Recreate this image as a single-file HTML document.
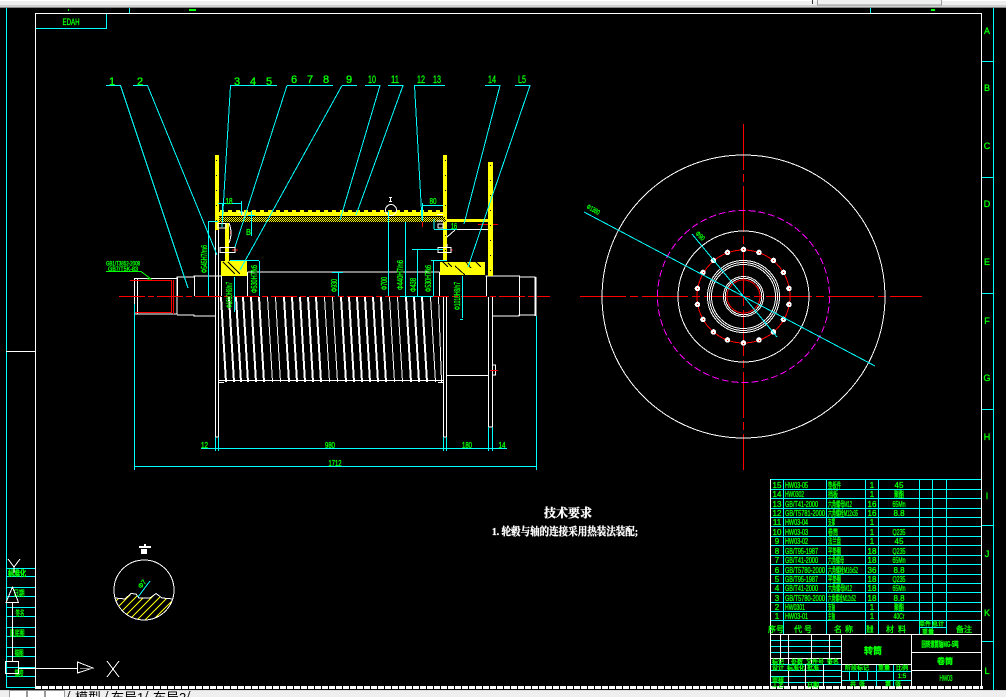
<!DOCTYPE html>
<html><head><meta charset="utf-8"><style>
html,body{margin:0;padding:0;background:#000;width:1006px;height:697px;overflow:hidden}
svg{display:block;position:absolute;left:0;top:0}
text{font-family:"Liberation Sans","Noto Sans CJK SC",sans-serif;fill:#0f0;stroke:#0f0;stroke-width:.35px;font-size:8px}
.c{text-anchor:middle}
.l{font-size:11px}
.nk{stroke:none}
</style></head><body>
<svg width="1006" height="697" viewBox="0 0 1006 697" xmlns="http://www.w3.org/2000/svg" shape-rendering="crispEdges">
<defs>
<pattern id="chk" width="2" height="2" patternUnits="userSpaceOnUse"><rect width="2" height="2" fill="#000"/><rect width="1" height="1" fill="#ff0"/><rect x="1" y="1" width="1" height="1" fill="#ff0"/></pattern>
<clipPath id="hc"><circle cx="144" cy="590" r="30"/></clipPath>
</defs>
<rect width="1006" height="697" fill="#000"/>

<!-- frame -->
<g fill="none" stroke="#fff">
<path d="M35.5 686V13.5H981.5V686"/>
</g>
<g fill="none" stroke="#0ff">
<path d="M6.5 8V687M993.5 8V690M129.5 8V13M870.5 8V13"/>
<path d="M36 28.5H106.5V14"/>
<path d="M6 568.5H35M6 576.5H35M6 587.5H35M6 596.5H35M6 607.5H35M6 616.5H35M6 627.5H35M6 636.5H35M6 647.5H35M6 656.5H35M6 667.5H35M6 676.5H35M6 687.5H35"/>
<path d="M982 61.5H993M982 177.5H993M982 293.5H993M982 409.5H993M982 525.5H993M982 641.5H993"/>
<path d="M6 351.5H35" stroke="#fff"/>
</g>
<text x="71" y="25" class="c" textLength="17" lengthAdjust="spacingAndGlyphs" style="font-size:9px">EDAH</text>
<g style="font-size:9px">
<text x="987" y="34" class="c" style="font-size:9px">A</text><text x="987" y="91" class="c" style="font-size:9px">B</text><text x="987" y="149" class="c" style="font-size:9px">C</text><text x="987" y="207" class="c" style="font-size:9px">D</text><text x="987" y="265" class="c" style="font-size:9px">E</text><text x="987" y="324" class="c" style="font-size:9px">F</text><text x="987" y="381" class="c" style="font-size:9px">G</text><text x="987" y="440" class="c" style="font-size:9px">H</text><text x="987" y="499" class="c" style="font-size:9px">I</text><text x="987" y="557" class="c" style="font-size:9px">J</text><text x="987" y="616" class="c" style="font-size:9px">K</text><text x="987" y="674" class="c" style="font-size:9px">L</text>
</g>
<rect x="189" y="9" width="7" height="2" fill="#0f0"/><rect x="68" y="9" width="1" height="2" fill="#0f0"/><rect x="931" y="9" width="4" height="2" fill="#0f0"/>

<!-- left table text -->
<g>
<text x="17" y="576" class="c" textLength="18" lengthAdjust="spacingAndGlyphs" font-weight="bold">标准化</text>
<text x="19" y="596" class="c" textLength="11" lengthAdjust="spacingAndGlyphs">日期</text>
<text x="20" y="616" class="c" textLength="9" lengthAdjust="spacingAndGlyphs">签名</text>
<text x="17" y="636" class="c" textLength="15" lengthAdjust="spacingAndGlyphs">旧底图</text>
<text x="19" y="656" class="c" textLength="9" lengthAdjust="spacingAndGlyphs">描图</text>
<text x="19" y="676" class="c" textLength="9" lengthAdjust="spacingAndGlyphs">描校</text>
</g>

<!-- shaft outline -->
<g stroke="#fff" fill="none">
<path d="M134.5 279V314H177V277H194V276H221.5V296M137.5 279V314M134 278.500H177M177 315H194V316H215"/>
<path d="M194.5 276V296M177.5 277V296M215.5 230V437H218.5V296"/>
<path d="M218.5 230V296M247.5 272H439.5M247.5 272V296M439.500 272V296"/>
<path d="M443.500 297V437H446.500V297M446.500 375.500H488M488.500 297V427H492.500V297"/>
<path d="M492 316H519V315H536"/>
<path d="M485.500 276H519.500V296M519.500 277H535.500"/>
<path d="M486.500 276V296M519.500 297V316"/>
<path d="M493 365H495.500V375H493"/>
<path d="M447 229.500H488"/>
</g>
<path d="M535.500 277V316" stroke="#fff" stroke-width="2"/>

<!-- centre lines -->
<g stroke="#f00" fill="none">
<path d="M119 296.500H550" stroke-dasharray="26 3 6 3"/>
<path d="M580 296.500H922" stroke-dasharray="46 4 8 4"/>
<path d="M743.500 124V470" stroke-dasharray="46 4 8 4"/>
</g>
<g stroke="#f00" fill="none">
<path d="M130 280.500H172M171.500 280V313M135 312.500H172M173.500 280V314"/>
<path d="M490 370.500H498"/>
<path d="M241.500 215V220M221.500 218V223M230.500 231V234M422.500 221V227M232 250H238M451 250H453M478 224.500H498"/>
</g>

<!-- grooves -->
<g stroke="#fff" fill="none" stroke-width="2">
<path d="M221 297L226 382M229 297L234 382M236 297L241 382M243 297L248 382M251 297L256 382M259 297L264 382M284 297L289 382M292 297L297 382M300 297L305 382M308 297L313 382M316 297L321 382M341 297L346 382M349 297L354 382M357 297L362 382M365 297L370 382M373 297L378 382M381 297L386 382M406 297L411 382M414 297L419 382M422 297L427 382"/>
</g>
<g stroke="#fff" fill="none" stroke-width="1">
<path d="M267.500 297L272.500 382M275.500 297L280.500 382M324.500 297L329.500 382M332.500 297L337.500 382M389.500 297L394.500 382M397.500 297L402.500 382M430.500 297L435.500 382M438.500 297L441.500 382"/>
<path d="M219 380.500H443M219 382.500H224M438 382.500H443"/>
</g>

<!-- yellow parts -->
<g fill="#ff0">
<rect x="215" y="155" width="4" height="75"/>
<rect x="218" y="212" width="225" height="4"/>
<rect x="443" y="155" width="4" height="106"/>
<rect x="488" y="162" width="5" height="114"/>
<rect x="447" y="219" width="41" height="3"/>
<rect x="221" y="261" width="26" height="15"/>
<rect x="440" y="262" width="45" height="13"/>
<rect x="225" y="223" width="4" height="39"/>
</g>
<rect x="219" y="217" width="226" height="5" fill="url(#chk)"/>
<path d="M220 211H443" stroke="#ff0" stroke-width="2" stroke-dasharray="4 4"/>
<g stroke="#000" fill="none">
<path d="M216.500 160V230M445.500 160V260M490.500 165V276" stroke-dasharray="1 14"/>
<path d="M223 262L235 274M228 262L240 274M448 263L452 267M455 266L465 275M466 262L471 268M476 262L481 267M443 262L448 267"/>
</g>

<!-- bolts -->
<g stroke="#fff" fill="none">
<path d="M218 223.500H226V228H218ZM220 247.500H235V252.500H220ZM438 247.500H451V252.500H438ZM229 223Q233 233 229 243M237.500 212H243V216M437 214.500H443M438 224H443V228H438ZM437 221H443M447 244V247"/>
<path d="M447 237L455 230"/>
</g>
<!-- weld mark -->
<g stroke="#fff" fill="none"><circle cx="391" cy="210" r="5.500"/><path d="M389 197.500H392M390.500 197V201M389 201.500H392"/></g>

<!-- leaders and dims -->
<g stroke="#0ff" fill="none">
<path d="M106 85.500H120.500L188 288M133 85.500H147.500L217 255"/>
<path d="M230 85.500H277M230.500 85.500L222 227"/>
<path d="M287 85.500H333M287 85.500L235 247M342 85.500L240 270"/>
<path d="M342 85.500H357M365 85.500H380L340 220M388 85.500H403L356 215"/>
<path d="M414 85.500H445M414.500 85.500L422 220"/>
<path d="M485 85.500H500L464 224M515 85.500H530L468 267"/>
<path d="M218 203.500H241.500M241.500 201V215M222.500 203V215"/>
<path d="M423 205.500H443M422.500 203V221"/>
<path d="M208.500 221.500H218M208.500 221V296"/>
<path d="M234.500 277V312M259.500 261V296M230 260.500H259"/>
<path d="M251.500 211V236M248 215.500H255"/>
<path d="M338.500 272V296M332 272.500H343"/>
<path d="M388.500 211V296M405.500 222V296M417.500 250V296M433.500 261V296M400 296.500H433"/>
<path d="M412 249.500H443M431 260.500H447M462.500 276V318M460 319.500H463M434 229.500H457M434 219V229"/>
<path d="M201 448.500H507M215.500 437V451M218.500 437V451M443.500 437V451M446.500 437V451M488.500 427V451M492.500 427V451"/>
<path d="M134 466.500H536M134.500 304V470M536.500 316V470"/>
</g>
<path d="M106 271.500H141L151 279H147" stroke="#0f0" fill="none" stroke-dasharray="0"/>

<!-- leader labels -->
<g>
<text x="112" y="85" class="c l">1</text><text x="140" y="85" class="c l">2</text><text x="237" y="85" class="c l">3</text><text x="253" y="85" class="c l">4</text><text x="269" y="85" class="c l">5</text><text x="294" y="83" class="c l">6</text><text x="310" y="83" class="c l">7</text><text x="326" y="83" class="c l">8</text><text x="349" y="83" class="c l">9</text><text x="372" y="83" class="c l" textLength="8" lengthAdjust="spacingAndGlyphs">10</text><text x="395" y="83" class="c l" textLength="8" lengthAdjust="spacingAndGlyphs">11</text><text x="421" y="83" class="c l" textLength="8" lengthAdjust="spacingAndGlyphs">12</text><text x="437" y="83" class="c l" textLength="8" lengthAdjust="spacingAndGlyphs">13</text><text x="492" y="83" class="c l" textLength="8" lengthAdjust="spacingAndGlyphs">14</text><text x="522" y="83" class="c l" textLength="8" lengthAdjust="spacingAndGlyphs">L5</text>
</g>
<!-- dim labels -->
<g>
<text x="229" y="204" class="c" textLength="7" lengthAdjust="spacingAndGlyphs">18</text>
<text x="433" y="204" class="c" textLength="7" lengthAdjust="spacingAndGlyphs">80</text>
<text x="454" y="229" class="c" textLength="6" lengthAdjust="spacingAndGlyphs">16</text>
<text x="248.500" y="235" class="c" textLength="5" lengthAdjust="spacingAndGlyphs">B</text>
<text x="204.500" y="448" class="c" textLength="7" lengthAdjust="spacingAndGlyphs">12</text>
<text x="330" y="448" class="c" textLength="10" lengthAdjust="spacingAndGlyphs">980</text>
<text x="467" y="448" class="c" textLength="10" lengthAdjust="spacingAndGlyphs">180</text>
<text x="502" y="448" class="c" textLength="7" lengthAdjust="spacingAndGlyphs">14</text>
<text x="335" y="466" class="c" textLength="13" lengthAdjust="spacingAndGlyphs">1712</text>
<text transform="translate(207 273) rotate(-90)" textLength="28" lengthAdjust="spacingAndGlyphs">Φ545H7/m6</text>
<text transform="translate(232 308) rotate(-90)" textLength="26" lengthAdjust="spacingAndGlyphs">Φ1010H8/n7</text>
<text transform="translate(257 293) rotate(-90)" textLength="28" lengthAdjust="spacingAndGlyphs">Φ530H7/k6</text>
<text transform="translate(337 292) rotate(-90)" textLength="13" lengthAdjust="spacingAndGlyphs">Φ930</text>
<text transform="translate(387 290) rotate(-90)" textLength="13" lengthAdjust="spacingAndGlyphs">Φ700</text>
<text transform="translate(403 290) rotate(-90)" textLength="30" lengthAdjust="spacingAndGlyphs">Φ440H7/n6</text>
<text transform="translate(416 292) rotate(-90)" textLength="14" lengthAdjust="spacingAndGlyphs">Φ438</text>
<text transform="translate(431 292) rotate(-90)" textLength="27" lengthAdjust="spacingAndGlyphs">Φ530H7/k6</text>
<text transform="translate(460 310) rotate(-90)" textLength="28" lengthAdjust="spacingAndGlyphs">Φ1010H8/n7</text>
<text x="106" y="265.500" style="font-size:6px" textLength="34" lengthAdjust="spacingAndGlyphs">GB1/T3852-2008</text>
<text x="108" y="271" style="font-size:6px" textLength="30" lengthAdjust="spacingAndGlyphs">GB7/T5K-83</text>
<text transform="translate(586 208) rotate(30)" style="font-size:7px" textLength="14" lengthAdjust="spacingAndGlyphs">Φ1380</text>
<text transform="translate(695 234) rotate(45)" style="font-size:7px" textLength="10" lengthAdjust="spacingAndGlyphs">Φ90</text>
</g>

<!-- end view -->
<g fill="none" stroke="#fff">
<circle cx="743.500" cy="296.500" r="141.500"/>
<circle cx="743.500" cy="296.500" r="65.500"/>
<circle cx="743.500" cy="296.500" r="36"/>
<circle cx="743.500" cy="296.500" r="34"/>
<circle cx="743.500" cy="296.500" r="32"/>
<circle cx="743.500" cy="296.500" r="20"/>
<circle cx="743.500" cy="296.500" r="18.300"/>
</g>
<circle cx="743.500" cy="296.500" r="86" fill="none" stroke="#f0f" stroke-dasharray="7 3"/>
<circle cx="743.500" cy="296.500" r="46.500" fill="none" stroke="#f00"/>
<circle cx="743.500" cy="296.500" r="16.500" fill="none" stroke="#f00"/>
<g fill="#fff" stroke="none">
<circle cx="743.500" cy="249.500" r="2.800"/><circle cx="759" cy="252.500" r="2.800"/><circle cx="773.500" cy="260.500" r="2.800"/><circle cx="783.500" cy="272.500" r="2.800"/><circle cx="789" cy="288.500" r="2.800"/><circle cx="789" cy="304.500" r="2.800"/><circle cx="783.500" cy="319.500" r="2.800"/><circle cx="773.500" cy="332" r="2.800"/><circle cx="759" cy="340" r="2.800"/><circle cx="743.500" cy="343" r="2.800"/><circle cx="727.500" cy="340" r="2.800"/><circle cx="713.500" cy="332" r="2.800"/><circle cx="703" cy="319.500" r="2.800"/><circle cx="697.500" cy="304.500" r="2.800"/><circle cx="697.500" cy="288.500" r="2.800"/><circle cx="703" cy="272.500" r="2.800"/><circle cx="713.500" cy="260.500" r="2.800"/><circle cx="727.500" cy="252.500" r="2.800"/>
</g>
<g fill="#f00" stroke="none">
<rect x="743" y="249" width="1" height="1"/><rect x="759" y="252" width="1" height="1"/><rect x="773" y="260" width="1" height="1"/><rect x="783" y="272" width="1" height="1"/><rect x="789" y="288" width="1" height="1"/><rect x="789" y="304" width="1" height="1"/><rect x="783" y="319" width="1" height="1"/><rect x="773" y="332" width="1" height="1"/><rect x="759" y="340" width="1" height="1"/><rect x="743" y="343" width="1" height="1"/><rect x="727" y="340" width="1" height="1"/><rect x="713" y="332" width="1" height="1"/><rect x="703" y="319" width="1" height="1"/><rect x="697" y="304" width="1" height="1"/><rect x="697" y="288" width="1" height="1"/><rect x="703" y="272" width="1" height="1"/><rect x="713" y="260" width="1" height="1"/><rect x="727" y="252" width="1" height="1"/>
</g>
<path d="M584 212L875 366M692 234L777 337" stroke="#0ff" fill="none"/>

<!-- section detail -->
<g clip-path="url(#hc)">
<g stroke="#ff0" fill="none">
<path d="M100 625L130 595M108 625L138 595M116 625L146 595M124 625L154 595M132 625L162 595M140 625L170 595M148 625L178 595M156 625L186 595M92 625L122 595"/>
</g>
<path d="M100 598H115L125 599L131 593.500L136 594L139 598H150L156 593.500L162 598L173 599H180V540H100Z" fill="#000"/>
</g>
<circle cx="144" cy="590" r="30" fill="none" stroke="#fff"/>
<path d="M115 598L125 599L131 593.500L136 594L139 598L150 598L156 593.500L162 598L173 599" stroke="#fff" fill="none"/>
<path d="M138 597L150 581" stroke="#0ff" fill="none"/>
<text transform="translate(141 589) rotate(-50)" style="font-size:7px" textLength="9" lengthAdjust="spacingAndGlyphs">Φ7</text>
<g fill="#fff"><rect x="139" y="546" width="12" height="2"/><rect x="144" y="544" width="2" height="2"/><rect x="141" y="549" width="6" height="5"/></g>

<!-- UCS icon -->
<g stroke="#fff" fill="none">
<rect x="5.500" y="661.500" width="13" height="12"/>
<path d="M12.500 661V602M6 602.500H18.500L12.500 587ZM18 668.500H77.500M77.500 662V673L93 668ZM107 661L119 677M119 661L107 677M8 559L14 567L20 559M14 567V573"/>
<path d="M80 668.500H93" stroke="#888"/>
</g>

<!-- title text -->
<text x="568" y="517" class="c nk" style="font-family:'Liberation Serif','Noto Serif CJK SC',serif;font-size:12px;font-weight:bold;fill:#fff;stroke:#fff">技术要求</text>
<text x="492" y="535" textLength="146" lengthAdjust="spacingAndGlyphs" style="font-family:'Liberation Serif','Noto Serif CJK SC',serif;font-size:11px;font-weight:bold;fill:#fff;stroke:#fff">1. 轮毂与轴的连接采用热装法装配;</text>

<!-- parts table -->
<g stroke="#0ff" fill="none">
<path d="M770 479.500H981M770 489.500H981M770 498.500H981M770 508.500H981M770 517.500H981M770 526.500H981M770 536.500H981M770 545.500H981M770 555.500H981M770 564.500H981M770 574.500H981M770 583.500H981M770 592.500H981M770 602.500H981M770 611.500H981M770 620.500H981M919 627.500H946"/>
<path d="M783.500 479V634M826.500 479V634M865.500 479V634M878.500 479V634M919.500 479V634M932.500 479V634M946.500 479V634"/>
<path d="M771 640.500H841M771 646.500H841M771 652.500H841M771 664.500H841M771 670.500H841M771 676.500H841M771 682.500H841"/>
<path d="M841 671.500H911M841 680.500H911M849.500 671V680M858.500 671V680M867.500 671V680M876.500 664V686M893.500 664V686"/>
</g>
<path d="M770.500 479V686M841.500 634V686M911.500 634V686M771 634.500H981M771 658.500H841M841 664.500H911M911 652.500H981M911 670.500H981M780.500 634V664M788.500 634V686M811.500 634V664M829.500 634V664M805.500 664V686M823.500 664V686" stroke="#fff" fill="none"/>
<path d="M35 687.500H983" stroke="#fff" stroke-width="3" stroke-dasharray="6 1"/>

<g>
<text x="777" y="488" class="c">15</text><text x="785" y="488" textLength="23" lengthAdjust="spacingAndGlyphs">HW03-05</text><text x="828" y="488" textLength="13" lengthAdjust="spacingAndGlyphs">垫板件</text><text x="872" y="488" class="c">1</text><text x="899" y="488" class="c">45</text>
<text x="777" y="497" class="c">14</text><text x="785" y="497" textLength="19" lengthAdjust="spacingAndGlyphs">HW0302</text><text x="828" y="497" textLength="10" lengthAdjust="spacingAndGlyphs">挡板</text><text x="872" y="497" class="c">1</text><text x="899" y="497" class="c" textLength="10" lengthAdjust="spacingAndGlyphs">聚酯</text>
<text x="777" y="507" class="c">13</text><text x="785" y="507" textLength="33" lengthAdjust="spacingAndGlyphs">GB/T41-2000</text><text x="828" y="507" textLength="24" lengthAdjust="spacingAndGlyphs">六角螺母M12</text><text x="872" y="507" class="c">16</text><text x="899" y="507" class="c" textLength="13" lengthAdjust="spacingAndGlyphs">65Mn</text>
<text x="777" y="516" class="c">12</text><text x="785" y="516" textLength="40" lengthAdjust="spacingAndGlyphs">GB/T5781-2000</text><text x="828" y="516" textLength="30" lengthAdjust="spacingAndGlyphs">六角螺栓M12x35</text><text x="872" y="516" class="c">16</text><text x="899" y="516" class="c">8.8</text>
<text x="777" y="525" class="c">11</text><text x="785" y="525" textLength="23" lengthAdjust="spacingAndGlyphs">HW03-04</text><text x="828" y="525" textLength="7" lengthAdjust="spacingAndGlyphs">支撑</text><text x="872" y="525" class="c">1</text>
<text x="777" y="535" class="c">10</text><text x="785" y="535" textLength="23" lengthAdjust="spacingAndGlyphs">HW03-03</text><text x="828" y="535" textLength="10" lengthAdjust="spacingAndGlyphs">卷筒</text><text x="872" y="535" class="c">1</text><text x="899" y="535" class="c" textLength="13" lengthAdjust="spacingAndGlyphs">Q235</text>
<text x="777" y="544" class="c">9</text><text x="785" y="544" textLength="23" lengthAdjust="spacingAndGlyphs">HW03-02</text><text x="828" y="544" textLength="13" lengthAdjust="spacingAndGlyphs">法兰盘</text><text x="872" y="544" class="c">1</text><text x="899" y="544" class="c">45</text>
<text x="777" y="554" class="c">8</text><text x="785" y="554" textLength="33" lengthAdjust="spacingAndGlyphs">GB/T95-1987</text><text x="828" y="554" textLength="13" lengthAdjust="spacingAndGlyphs">平垫圈</text><text x="872" y="554" class="c">18</text><text x="899" y="554" class="c" textLength="13" lengthAdjust="spacingAndGlyphs">Q235</text>
<text x="777" y="563" class="c">7</text><text x="785" y="563" textLength="33" lengthAdjust="spacingAndGlyphs">GB/T41-2000</text><text x="828" y="563" textLength="16" lengthAdjust="spacingAndGlyphs">六角螺母</text><text x="872" y="563" class="c">18</text><text x="899" y="563" class="c" textLength="13" lengthAdjust="spacingAndGlyphs">65Mn</text>
<text x="777" y="573" class="c">6</text><text x="785" y="573" textLength="40" lengthAdjust="spacingAndGlyphs">GB/T5780-2000</text><text x="828" y="573" textLength="30" lengthAdjust="spacingAndGlyphs">六角螺栓M16x52</text><text x="872" y="573" class="c">36</text><text x="899" y="573" class="c">8.8</text>
<text x="777" y="582" class="c">5</text><text x="785" y="582" textLength="33" lengthAdjust="spacingAndGlyphs">GB/T95-1987</text><text x="828" y="582" textLength="13" lengthAdjust="spacingAndGlyphs">平垫圈</text><text x="872" y="582" class="c">18</text><text x="899" y="582" class="c" textLength="13" lengthAdjust="spacingAndGlyphs">Q235</text>
<text x="777" y="591" class="c">4</text><text x="785" y="591" textLength="33" lengthAdjust="spacingAndGlyphs">GB/T41-2000</text><text x="828" y="591" textLength="24" lengthAdjust="spacingAndGlyphs">六角螺母M12</text><text x="872" y="591" class="c">18</text><text x="899" y="591" class="c" textLength="13" lengthAdjust="spacingAndGlyphs">65Mn</text>
<text x="777" y="601" class="c">3</text><text x="785" y="601" textLength="40" lengthAdjust="spacingAndGlyphs">GB/T5780-2000</text><text x="828" y="601" textLength="28" lengthAdjust="spacingAndGlyphs">六角螺栓M12x52</text><text x="872" y="601" class="c">18</text><text x="899" y="601" class="c">8.8</text>
<text x="777" y="610" class="c">2</text><text x="785" y="610" textLength="20" lengthAdjust="spacingAndGlyphs">HW0301</text><text x="828" y="610" textLength="7" lengthAdjust="spacingAndGlyphs">支轴</text><text x="872" y="610" class="c">1</text><text x="899" y="610" class="c" textLength="10" lengthAdjust="spacingAndGlyphs">聚酯</text>
<text x="777" y="619" class="c">1</text><text x="785" y="619" textLength="23" lengthAdjust="spacingAndGlyphs">HW03-01</text><text x="828" y="619" textLength="7" lengthAdjust="spacingAndGlyphs">主轴</text><text x="872" y="619" class="c">1</text><text x="899" y="619" class="c" textLength="11" lengthAdjust="spacingAndGlyphs">40Cr</text>
<text x="776" y="632" class="c">序号</text><text x="798" y="632" class="c">代</text><text x="808" y="632" class="c">号</text><text x="838" y="632" class="c">名</text><text x="849" y="632" class="c">称</text><text x="870" y="632" class="c" textLength="7" lengthAdjust="spacingAndGlyphs">数量</text><text x="890" y="632" class="c">材</text><text x="902" y="632" class="c">料</text>
<text x="925" y="626" class="c" style="font-size:6px">单件</text><text x="938" y="626" class="c" style="font-size:6px">总计</text><text x="928" y="634" class="c" style="font-size:6px">重量</text>
<text x="960" y="632" class="c">备</text><text x="968" y="632" class="c">注</text>
<text x="873" y="654" class="c" style="font-size:9px;font-weight:bold">转筒</text>
<text x="940" y="647" class="c" textLength="37" lengthAdjust="spacingAndGlyphs" style="font-weight:bold">回转滚筒轴MG-5吨</text>
<text x="945" y="664" class="c" style="font-weight:bold">卷筒</text>
<text x="946" y="681" class="c" textLength="13" lengthAdjust="spacingAndGlyphs">HW03</text>
<text x="778" y="664" class="c" style="font-size:6px">标记</text><text x="797" y="664" class="c" style="font-size:6px">处数</text><text x="815" y="664" class="c" style="font-size:6px">文件号</text><text x="833" y="664" class="c" style="font-size:6px">签名</text>
<text x="778" y="670" class="c" style="font-size:6px">设计</text><text x="796" y="670" class="c" style="font-size:6px">标准化</text><text x="813" y="670" class="c" style="font-size:6px">批准</text>
<text x="778" y="682" class="c" style="font-size:6px">审核</text><text x="778" y="687" class="c" style="font-size:6px">工艺</text><text x="813" y="687" class="c" style="font-size:6px">日期</text>
<text x="857" y="670" class="c" style="font-size:6px">阶段标记</text><text x="884" y="670" class="c" style="font-size:6px">重量</text><text x="902" y="670" class="c" style="font-size:6px">比例</text>
<text x="902" y="678" class="c" style="font-size:6px">1:5</text>
<text x="853" y="686" class="c" style="font-size:6px">共</text><text x="862" y="686" class="c" style="font-size:6px">张</text><text x="888" y="686" class="c" style="font-size:6px">第</text><text x="898" y="686" class="c" style="font-size:6px">张</text>
</g>

<!-- top chrome -->
<rect x="0" y="0" width="1006" height="8" fill="#eee"/>
<rect x="0" y="0" width="1006" height="1" fill="#fff"/>
<rect x="0" y="5" width="1006" height="2" fill="#d0d0d0"/>
<rect x="0" y="7" width="1006" height="1" fill="#888"/>
<rect x="817.500" y="-1" width="124" height="6" fill="#f0f0f0" stroke="#999"/>
<rect x="812" y="0" width="1" height="4" fill="#333"/>

<!-- bottom chrome -->
<rect x="0" y="690" width="1006" height="7" fill="#efefef"/>
<rect x="0" y="690" width="1006" height="1" fill="#ddd"/>
<g fill="#fff" stroke="#999"><rect x="9.500" y="690.500" width="17" height="8"/><rect x="27.500" y="690.500" width="17" height="8"/><rect x="45.500" y="690.500" width="19" height="8"/></g>
<path d="M70 691L68 697M108 691L106 697M148 691L146 697M190 691L188 697" stroke="#333" fill="none"/>
<text x="75" y="702" class="nk" style="fill:#000;font-size:13px">模型</text>
<text x="111" y="702" class="nk" style="fill:#000;font-size:13px">布局1</text>
<text x="153" y="702" class="nk" style="fill:#000;font-size:13px">布局2</text>
</svg>
</body></html>
